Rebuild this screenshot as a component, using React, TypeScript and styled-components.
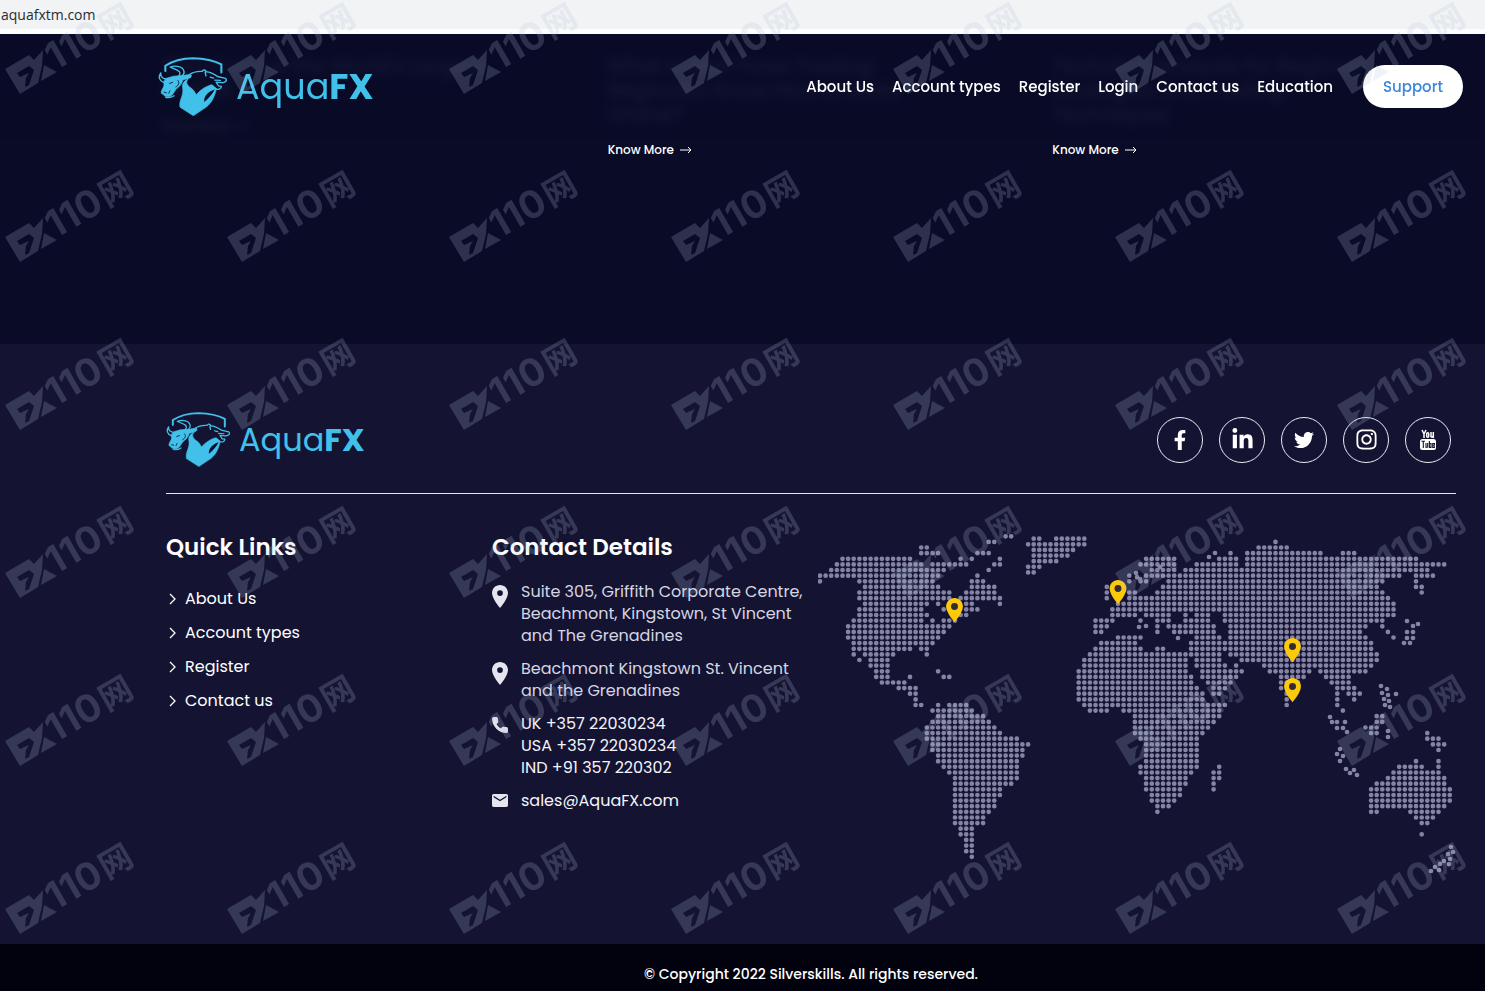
import React from "react";
import styled, { createGlobalStyle } from "styled-components";
import { FaFacebookF, FaInstagram, FaLinkedinIn, FaTwitter } from "react-icons/fa";

const GlobalStyle = createGlobalStyle`
  *, *::before, *::after { box-sizing: border-box; }
  body {
    margin: 0;
    background: #02020f;
    color: #fff;
    font-family: Poppins, Inter, "Noto Sans CJK SC", sans-serif;
  }
  a { color: inherit; text-decoration: none; }
  ul { list-style: none; margin: 0; padding: 0; }
`;

const Page = styled.div`
  position: relative;
  overflow: hidden;
`;

const AddressBar = styled.div`
  height: 34px;
  padding: 5px 1px 0;
  background: #f1f3f4;
  border-bottom: 5px solid #fcfefe;
  color: #2a2c30;
  font: 14px/20px "Open Sans", "Noto Sans", sans-serif;
`;

const Articles = styled.main`
  position: relative;
  height: 310px;
  background: #090b27;
`;

const Header = styled.header`
  position: absolute;
  inset: 0 0 auto;
  height: 105px;
  padding: 0 22px 0 158px;
  display: flex;
  align-items: center;
  justify-content: space-between;
  background: rgba(9, 11, 39, 0.93);
  backdrop-filter: blur(4px);
`;

const Nav = styled.nav`
  display: flex;
  align-items: center;
  gap: 18px;
  font-size: 15px;
  font-weight: 500;
  line-height: 20px;
  white-space: nowrap;
`;

const SupportButton = styled.button`
  width: 100px;
  height: 43px;
  margin-left: 12px;
  border: 0;
  border-radius: 22px;
  background: #fff;
  color: #3d86dc;
  font: inherit;
  cursor: pointer;
`;

const Cards = styled.div`
  display: grid;
  grid-template-columns: repeat(3, 1fr);
  padding-left: 163px;
  margin-right: -12px;
`;

const Card = styled.article`
  h2 {
    margin: 0 0 14px;
    padding-top: 20px;
    color: #b4b8da;
    font-size: 20px;
    font-weight: 500;
    line-height: 24px;
    white-space: pre;
  }
`;

const KnowMore = styled.a`
  display: flex;
  align-items: center;
  gap: 6px;
  font-size: 12px;
  font-weight: 500;
  line-height: 20px;
`;

const Brand = styled.a<{ $small?: boolean }>`
  display: inline-flex;
  align-items: center;
  gap: 8px;
  color: #41c1ea;
  font-size: ${(p) => (p.$small ? 32 : 35)}px;
  line-height: 48px;
  svg { width: ${(p) => (p.$small ? 65 : 70)}px; }
`;

const Footer = styled.footer`
  min-height: 600px;
  padding: 70px 29px 60px 166px;
  background: #141432;
`;

const FooterTop = styled.div`
  display: flex;
  align-items: center;
  justify-content: space-between;
  height: 80px;
  padding: 0 5px 28px 0;
  border-bottom: 1px solid #e6e7f2;
`;

const Socials = styled.div`
  display: flex;
  gap: 16px;
`;

const SocialLink = styled.a`
  display: grid;
  place-items: center;
  width: 46px;
  height: 46px;
  border: 1px solid #e9eaf5;
  border-radius: 50%;
`;

const Columns = styled.div`
  display: grid;
  grid-template-columns: 326px 326px minmax(0, 1fr);
  padding-top: 39px;
`;

const Heading = styled.h3`
  margin: 0 0 20px;
  font-size: 23px;
  font-weight: 600;
  line-height: 28px;
`;

const Links = styled.ul`
  padding-top: 6px;
  li { height: 34px; }
  a {
    display: inline-flex;
    align-items: center;
    gap: 8px;
    padding-left: 2px;
    font-size: 16px;
    line-height: 22px;
  }
`;

const ContactList = styled.ul`
  display: grid;
  gap: 11px;
  font-size: 16px;
  line-height: 22px;
`;

const ContactItem = styled.li<{ $strong?: boolean }>`
  display: grid;
  grid-template-columns: 29px 1fr;
  align-items: start;
  white-space: nowrap;
  color: ${(p) => (p.$strong ? "#f3f3fa" : "#d5d6e3")};
  svg { margin-top: 4px; fill: #e4e5ee; }
`;

const MapSvg = styled.svg`
  display: block;
  width: 100%;
`;

const Copyright = styled.div`
  padding: 20px 29px 7px 166px;
  background: #02020f;
  font-size: 14px;
  font-weight: 500;
  line-height: 20px;
  text-align: center;
`;

const WatermarkLayer = styled.svg`
  position: absolute;
  inset: 0;
  width: 100%;
  height: 100%;
  pointer-events: none;
`;

function Emblem() {
  return (
    <svg viewBox="440 157 200 170" fill="none" stroke="currentColor" strokeWidth="4" strokeLinejoin="round" strokeLinecap="round" aria-hidden="true">
      <g transform="scale(1 0.933)">
        <path d="M461 211V195Q492 173 540 172Q590 173 621 191V216" strokeWidth="6" />
        <path d="M475 199C491 193 511 197 514 211C517 223 507 229 496 230C505 222 505 213 496 209C488 205 483 202 475 199Z" />
        <path d="M448 217C440 230 444 241 456 246M448 217C447 228 451 233 461 235" />
        <path d="M462 234L484 227L511 225L533 221C538 226 535 233 524 235L511 239C508 255 498 260 491 268L481 284C474 292 461 293 455 283L449 279C449 269 455 264 457 256L457 243Z" fill="currentColor" strokeWidth="2" />
        <path d="M473 249L482 246M497 240C503 247 498 256 491 260M457 276L464 278M474 272L471 279" stroke="#0d0f2c" strokeWidth="2.5" />
        <path d="M462 292Q475 295 486 287" />
        <path d="M517 242L527 234C517 246 524 256 534 263C542 269 546 277 549 284C558 273 572 259 594 253L607 265C601 292 594 307 579 321L541 348L503 322C499 302 512 289 511 270C511 258 506 254 517 242Z" fill="currentColor" strokeWidth="2" />
        <path d="M572 306C570 290 582 274 602 268C596 281 586 294 572 306Z" fill="#0d0f2c" stroke="none" />
        <path d="M531 221C544 212 557 213 567 212C569 206 576 207 578 214C590 213 600 221 610 228L633 234C640 241 630 248 621 247L606 245L613 257L621 258C621 267 611 270 603 264L594 256M575 215L577 226M589 230L599 233M602 239L618 240" />
      </g>
    </svg>
  );
}

function Logo({ small }: { small?: boolean }) {
  return (
    <Brand href="#" $small={small}>
      <Emblem />
      <span>Aqua<b>FX</b></span>
    </Brand>
  );
}

function Arrow() {
  return (
    <svg width="12" height="8" viewBox="0 0 12 8" fill="none" stroke="currentColor" aria-hidden="true">
      <path d="M0 4H11M8 1L11 4L8 7" />
    </svg>
  );
}

function Chevron() {
  return (
    <svg width="9" height="12" viewBox="0 0 9 12" fill="none" stroke="currentColor" strokeWidth="1.3" aria-hidden="true">
      <path d="M2 1L7 6L2 11" />
    </svg>
  );
}

const PIN = "M12 2C8.13 2 5 5.13 5 9c0 5.25 7 13 7 13s7-7.75 7-13c0-3.87-3.13-7-7-7z";

function PinIcon() {
  return (
    <svg width="16" height="23" viewBox="5 2 14 20" aria-hidden="true">
      <path d={`${PIN}m0 9.5a2.5 2.5 0 1 1 0-5 2.5 2.5 0 0 1 0 5z`} />
    </svg>
  );
}

function PhoneIcon() {
  return (
    <svg width="16" height="16" viewBox="2 2 20 20" stroke="#e4e5ee" strokeWidth="1.8" strokeLinejoin="round" aria-hidden="true">
      <path d="M6.62 10.79c1.44 2.83 3.76 5.14 6.59 6.59l2.2-2.2c.27-.27.67-.36 1.02-.24 1.12.37 2.33.57 3.57.57.55 0 1 .45 1 1V20c0 .55-.45 1-1 1-9.39 0-17-7.61-17-17 0-.55.45-1 1-1h3.5c.55 0 1 .45 1 1 0 1.25.2 2.45.57 3.57.11.35.03.74-.25 1.02l-2.2 2.2z" />
    </svg>
  );
}

function MailIcon() {
  return (
    <svg width="16" height="13" viewBox="2 4 20 16" aria-hidden="true">
      <path d="M20 4H4c-1.1 0-2 .9-2 2v12c0 1.1.9 2 2 2h16c1.1 0 2-.9 2-2V6c0-1.1-.9-2-2-2zm0 4l-8 5-8-5V6l8 5 8-5v2z" />
    </svg>
  );
}

function YouTubeIcon() {
  return (
    <svg width="20" height="22" viewBox="0 0 20 22" fill="currentColor" aria-hidden="true">
      <g fill="none" stroke="currentColor" strokeWidth="1.5">
        <path d="M4 1L6 5V9M8 1L6 5" />
        <rect x="8.7" y="3.7" width="2" height="4.6" rx="1" />
        <path d="M13 3V7.5Q13 8.6 15 7.5M15.3 3V9" />
      </g>
      <rect x="2" y="10" width="16" height="11" rx="2.5" />
      <g fill="none" stroke="#141432" strokeWidth="1.1">
        <path d="M3.5 12.3H7M5.3 12.3V19M8 14V18.3L9.7 18V14M11.4 12V19M11.4 14.5H13V18.4H11.4M16.4 17.3V18.4H14.7V14.5H16.4V16.3H14.7" />
      </g>
    </svg>
  );
}

/* Dotted world map: each line is one row of the grid, each entry a run of columns. */
const ROWS = `33-34
30-31 81
18-19 78-83
18-21 28-30 73 76-89 93-95
4-16 25 27 32 58-63 71-74 76-106
3-18 20-26 31-32 57-63 67-74 76-111
2-22 30 59-63 65-108
0-21 28 55 58-103 106-109
0 7-20 27-29 55 57-58 62-100 106
8-21 27-31 51 61-99 106-107
7-23 26-31 51 55-56 60-100 107
7-23 25-32 51 55-101
8-19 21 26-27 32 53-102
7-18 22 26-28 52-102
7-19 25-26 52-56 58-62 65 67-69 72-102
6-18 20 22-24 49-52 57 60-62 65-69 72-100
5-23 49-51 60 62-70 73-97 100
5-22 49-50 60 63-70 73-96 101
5-21 53-57 67-71 73-97 102
6-20 50-56 66-98
6-16 18-19 49-57 60-61 66-98
6 8-13 19 48-71 73-99
7 9-12 47-65 67-71 75-99
9-12 47-65 67-72 74 79-98
10-12 21 46-65 68-75 80-87 89-97
10-12 16 22-23 46-66 68-74 82-86 90-94
11-15 46-66 69-73 82-85 91-94
14-17 46-67 70-72 82 84 92-95
16-17 46-68 70-71 83 92 94-96
17 46-68 83 92 95
17-18 21 23-26 47-72 83 92
20-27 48-51 54-71 93
21-29 56-71 99-100
20-30 56-70 99-100
19-31 56-69 97-99
19-32 56-68 98-99 108
19-35 57-67 108-110
20-37 58-67 109-111
20-36 58-67 110
21-36 58-67
21-35 58-67 106 110
22-35 57-67 71 103-107 110
23-35 57-66 70-71 102-110
24-35 58-65 70-71 101-111
24-34 58-65 70 99-111
24-32 58-64 70 98-112
24-32 59-64 98-112
24-31 59-63 98-112
24-31 60-62 98-111
24-30 60 98-99 105-110
24-29 106-109
24-29 107-108
25-27
25-27 107
26-27
26-27
26-27
27`.split("\n");

const GREENLAND = ["38-39 42-47", "37-47", "38-45", "38-44", "38-42", "37-39", "37-38"];

/* Islands that sit off the grid, in map units. */
const ISLANDS: [number, number][] = [
  [391, 24], [397, 20], [318, 40], [322, 46], [319, 44], [321, 94], [328, 93], [360, 105], [342, 34],
  [589, 88], [600, 91], [595, 93], [589, 99], [595, 99], [589, 105], [595, 105], [586, 110], [592, 110],
  [563, 153], [569, 156], [564, 160], [570, 162], [578, 161], [566, 166], [571, 168], [567, 172], [572, 174],
  [512, 184], [514, 189], [519, 189], [527, 189], [519, 195], [525, 195], [529, 199],
  [522, 216], [519, 221], [525, 223], [522, 228], [528, 236], [536, 237], [532, 240], [539, 242],
  [570, 198], [570, 204],
  [633, 314], [635, 319], [630, 321], [626, 328], [632, 326], [631, 331], [622, 331], [617, 334], [613, 338], [621, 337],
];

const PITCH = 5.623;

function runs(rows: string[], top: number) {
  return rows
    .map((row, r) =>
      row
        .split(" ")
        .map((run) => {
          const [from, to = from] = run.split("-").map(Number);
          let d = "";
          for (let c = from; c <= to; c++) d += `M${(2 + c * PITCH).toFixed(1)} ${(top + r * PITCH).toFixed(1)}h0`;
          return d;
        })
        .join("")
    )
    .join("");
}

const DOTS = runs(ROWS, 3.3) + runs(GREENLAND, 5.7) + ISLANDS.map(([x, y]) => `M${x} ${y}h0`).join("");

const PINS = [[136.5, 65], [300, 47], [474.5, 105], [474.5, 145]];

function WorldMap() {
  return (
    <MapSvg viewBox="0 0 638 342" role="img" aria-label="Office locations">
      <path d={DOTS} stroke="#8684a6" strokeWidth="4.7" strokeLinecap="round" />
      {PINS.map(([x, y]) => (
        <g key={`${x}-${y}`} transform={`translate(${x} ${y}) scale(1.2) translate(-12 -2)`}>
          <path d={PIN} fill="#fdca0b" />
          <circle cx="12" cy="9" r="2.9" fill="#332c32" />
        </g>
      ))}
    </MapSvg>
  );
}

function Watermark() {
  return (
    <WatermarkLayer aria-hidden="true">
      <defs>
        <pattern id="mark" width="222" height="168" patternUnits="userSpaceOnUse">
          <g fill="#b4bedc" opacity="0.21">
            <path fillRule="evenodd" d="M5 69L29 55L34 60L43 50L42 66L38 83L20 94ZM17 73L29 66L34 70L29 85L25 87L26 78L29 73L20 77Z" />
            <path d="M44 65L57 72L41 81Z" />
            <g transform="translate(55 71) rotate(-30)" fontFamily="Inter, sans-serif" fontWeight="700">
              <text fontSize="38">110</text>
              <text x="61" y="-1" fontSize="33" fontFamily="'Noto Sans CJK SC', sans-serif">网</text>
            </g>
          </g>
        </pattern>
      </defs>
      <rect width="100%" height="100%" fill="url(#mark)" />
    </WatermarkLayer>
  );
}

const NAV = ["About Us", "Account types", "Register", "Login", "Contact us", "Education"];
const QUICK = ["About Us", "Account types", "Register", "Contact us"];
const CARDS = [
  "Why Forex Is the World's Largest\nMarket",
  "What Is Best Forex Trading\nBeginners Know How to Make\nOnline?",
  "Technical Analysis for Beginner\nStrategies and Trading\nTechniques",
];
const SOCIALS = [
  { name: "Facebook", icon: <FaFacebookF size={20} /> },
  { name: "LinkedIn", icon: <FaLinkedinIn size={23} /> },
  { name: "Twitter", icon: <FaTwitter size={20} /> },
  { name: "Instagram", icon: <FaInstagram size={23} /> },
  { name: "YouTube", icon: <YouTubeIcon /> },
];

export default function App() {
  return (
    <>
      <GlobalStyle />
      <Page>
        <AddressBar>aquafxtm.com</AddressBar>
        <Articles>
          <Cards>
            {CARDS.map((title) => (
              <Card key={title}>
                <h2>{title}</h2>
                <KnowMore href="#">Know More <Arrow /></KnowMore>
              </Card>
            ))}
          </Cards>
          <Header>
            <Logo />
            <Nav>
              {NAV.map((n) => <a key={n} href="#">{n}</a>)}
              <SupportButton>Support</SupportButton>
            </Nav>
          </Header>
        </Articles>
        <Footer>
          <FooterTop>
            <Logo small />
            <Socials>
              {SOCIALS.map((s) => <SocialLink key={s.name} href="#" aria-label={s.name}>{s.icon}</SocialLink>)}
            </Socials>
          </FooterTop>
          <Columns>
            <section>
              <Heading>Quick Links</Heading>
              <Links>
                {QUICK.map((q) => <li key={q}><a href="#"><Chevron />{q}</a></li>)}
              </Links>
            </section>
            <section>
              <Heading>Contact Details</Heading>
              <ContactList>
                <ContactItem><PinIcon /><span>Suite 305, Griffith Corporate Centre,<br />Beachmont, Kingstown, St Vincent<br />and The Grenadines</span></ContactItem>
                <ContactItem><PinIcon /><span>Beachmont Kingstown St. Vincent<br />and the Grenadines</span></ContactItem>
                <ContactItem $strong><PhoneIcon /><span>UK +357 22030234<br />USA +357 22030234<br />IND +91 357 220302</span></ContactItem>
                <ContactItem $strong><MailIcon /><a href="mailto:sales@AquaFX.com">sales@AquaFX.com</a></ContactItem>
              </ContactList>
            </section>
            <WorldMap />
          </Columns>
        </Footer>
        <Copyright>© Copyright 2022 Silverskills. All rights reserved.</Copyright>
        <Watermark />
      </Page>
    </>
  );
}
